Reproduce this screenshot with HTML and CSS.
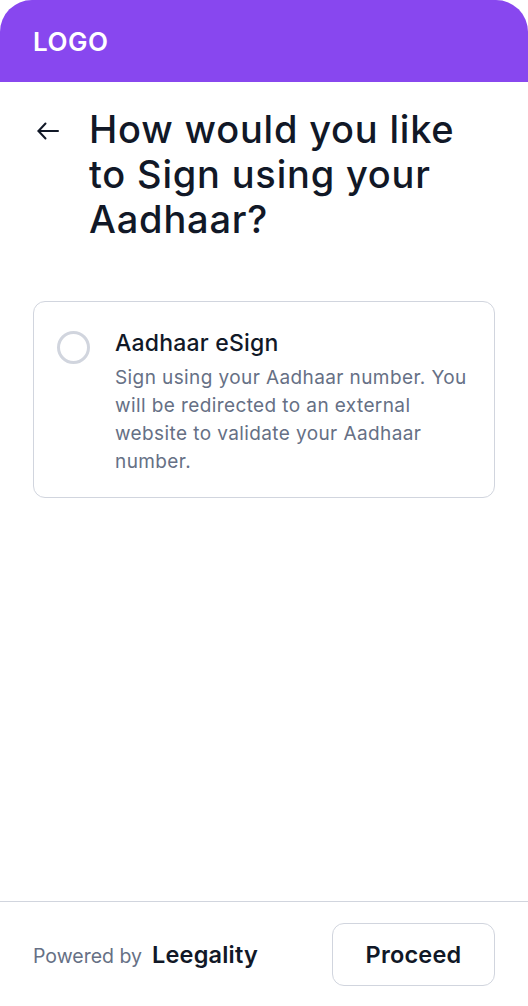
FILE: index.html
```html
<!DOCTYPE html>
<html lang="en">
<head>
<meta charset="utf-8">
<title>Aadhaar eSign</title>
<link rel="stylesheet" href="styles.css">
</head>
<body>
<div class="app">
  <header class="topbar"><span class="logo">LOGO</span></header>
  <main class="content">
    <div class="heading">
      <button class="back" aria-label="Back">
        <svg width="22" height="18" viewBox="0 0 22 18" fill="none" stroke="#111827" stroke-width="2" stroke-linecap="round" stroke-linejoin="round"><path d="M21 9H1.5"/><path d="M8.5 1.5L1.5 9l7 7.5"/></svg>
      </button>
      <h1 class="title">How would you like to Sign using your Aadhaar?</h1>
    </div>
    <label class="option">
      <span class="radio"></span>
      <span class="option-text">
        <span class="option-title">Aadhaar eSign</span>
        <span class="option-desc">Sign using your Aadhaar number. You will be redirected to an external website to validate your Aadhaar number.</span>
      </span>
    </label>
  </main>
  <footer class="footer">
    <div class="powered"><span class="powered-by">Powered by</span><span class="brand">Leegality</span></div>
    <button class="proceed">Proceed</button>
  </footer>
</div>
</body>
</html>
```
FILE: styles.css
```css
* { box-sizing: border-box; }
html, body { margin: 0; padding: 0; background: #fff; }
body { font-family: Inter, "Noto Sans", sans-serif; color: #111827; }
.app { height: 1006px; display: flex; flex-direction: column; }
.topbar {
  height: 82px; flex: none; background: #8847EF; border-radius: 32px 32px 0 0;
  display: flex; align-items: center; padding: 0 33px;
}
.logo { color: #fff; font-size: 26px; font-weight: 600; letter-spacing: 0.5px; line-height: 1; margin-top: 2px; }
.content { flex: 1; padding: 25px 33px 0 33px; }
.heading { display: flex; align-items: flex-start; gap: 30px; }
.back { flex: none; border: 0; background: none; padding: 0; margin: 15px 0 0 4px; width: 22px; height: 18px; display: flex; cursor: pointer; }
.title { margin: 0; max-width: 374px; font-size: 38px; line-height: 45px; font-weight: 500; color: #111827; letter-spacing: 0.8px; }
.option {
  margin-top: 59px; border: 1.5px solid #D1D5DE; border-radius: 12px;
  display: flex; gap: 25px; padding: 26px 24px 21px 23px; cursor: pointer;
}
.radio { flex: none; width: 33px; height: 33px; border: 3.5px solid #D1D5DE; border-radius: 50%; margin-top: 3px; }
.option-text { display: flex; flex-direction: column; }
.option-title { font-size: 23px; line-height: 30px; font-weight: 500; color: #111827; letter-spacing: 0.2px; }
.option-desc { font-size: 19px; line-height: 28px; color: #667085; margin-top: 6px; letter-spacing: 0.4px; }
.footer {
  height: 105px; flex: none; border-top: 1.5px solid #D1D5DE;
  display: flex; align-items: center; justify-content: space-between; padding: 0 33px;
}
.powered { display: flex; align-items: baseline; gap: 10px; }
.powered-by { font-size: 19.5px; color: #667085; }
.brand { font-size: 23.5px; font-weight: 600; color: #111827; letter-spacing: 0.2px; }
.proceed {
  width: 163px; height: 63px; border: 1.5px solid #D1D5DE; border-radius: 12px; background: #fff;
  font-family: Inter, "Noto Sans", sans-serif; font-size: 23.5px; font-weight: 600; color: #111827; letter-spacing: 0.2px; cursor: pointer;
}
```
